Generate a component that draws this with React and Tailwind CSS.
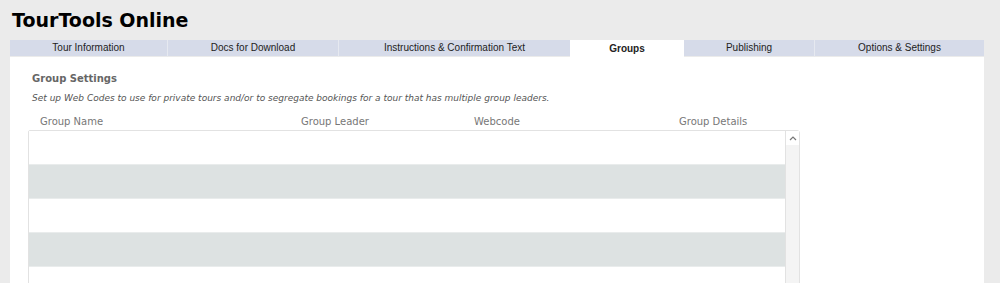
import React from 'react';

const tabs = [
    { label: 'Tour Information', w: 'w-[157px]' },
    { label: 'Docs for Download', w: 'w-[171px]' },
    { label: 'Instructions & Confirmation Text', w: 'w-[232px]' },
    { label: 'Groups', w: 'w-[114px]', active: true },
    { label: 'Publishing', w: 'w-[130px]' },
    { label: 'Options & Settings', w: 'w-[170px]' },
];

const rows = [0, 1, 2, 3, 4, 5];

export default function App() {
    return (
        <div className="h-[283px] overflow-hidden bg-[#ebebeb] pl-[10px] pr-[16px]">
            <h1
                className="pl-[2px] pt-[8px] h-[40px] text-[19px] font-bold text-black leading-[24px]"
                style={{ fontFamily: '"DejaVu Sans", Verdana, sans-serif' }}
            >
                TourTools Online
            </h1>

            <div className="flex h-[17px]" style={{ fontFamily: '"Liberation Sans", Arial, sans-serif' }}>
                {tabs.map((t, i) => (
                    <div
                        key={t.label}
                        className={`${t.w} flex items-center justify-center text-[10px] leading-none ${
                            t.active
                                ? 'bg-white font-bold text-[#222]'
                                : 'bg-[#d6dbe9] text-[#222] border-b border-[#ebebeb]'
                        } ${i > 0 && !t.active && !tabs[i - 1].active ? 'border-l border-l-[#e6e9f0]' : ''}`}
                    >
                        {t.label}
                    </div>
                ))}
            </div>

            <div
                className="bg-white h-[300px] pl-[22px] pt-[15px] text-[#666]"
                style={{ fontFamily: '"DejaVu Sans", Verdana, sans-serif' }}
            >
                <div className="text-[10px] font-bold leading-[14px]">Group Settings</div>
                <div className="mt-[5px] text-[9px] italic leading-[14px] text-[#555]">
                    Set up Web Codes to use for private tours and/or to segregate bookings for a tour that has multiple group leaders.
                </div>

                <div className="ml-[-4px] w-[772px]">
                    <div className="flex pl-[12px] mt-[7px] h-[18px] items-center text-[10px] text-[#777]">
                        <div className="w-[261px]">Group Name</div>
                        <div className="w-[173px]">Group Leader</div>
                        <div className="w-[205px]">Webcode</div>
                        <div>Group Details</div>
                    </div>

                    <div className="flex border border-[#e2e2e2] rounded-tl-[2px] rounded-tr-[3px]">
                        <div className="flex-1">
                            {rows.map((r) => (
                                <div
                                    key={r}
                                    className={`h-[34px] border-b border-[#e9ecec] ${
                                        r % 2 === 1 ? 'bg-[#dde2e2]' : 'bg-white'
                                    }`}
                                />
                            ))}
                        </div>
                        <div className="w-[14px] bg-[#f4f4f4] border-l border-[#e2e2e2]">
                            <div className="h-[14px] bg-white flex items-center justify-center">
                                <svg width="8" height="5" viewBox="0 0 8 5">
                                    <path d="M1 4 L4 1 L7 4" fill="none" stroke="#777" strokeWidth="1.2" />
                                </svg>
                            </div>
                        </div>
                    </div>
                </div>
            </div>
        </div>
    );
}
